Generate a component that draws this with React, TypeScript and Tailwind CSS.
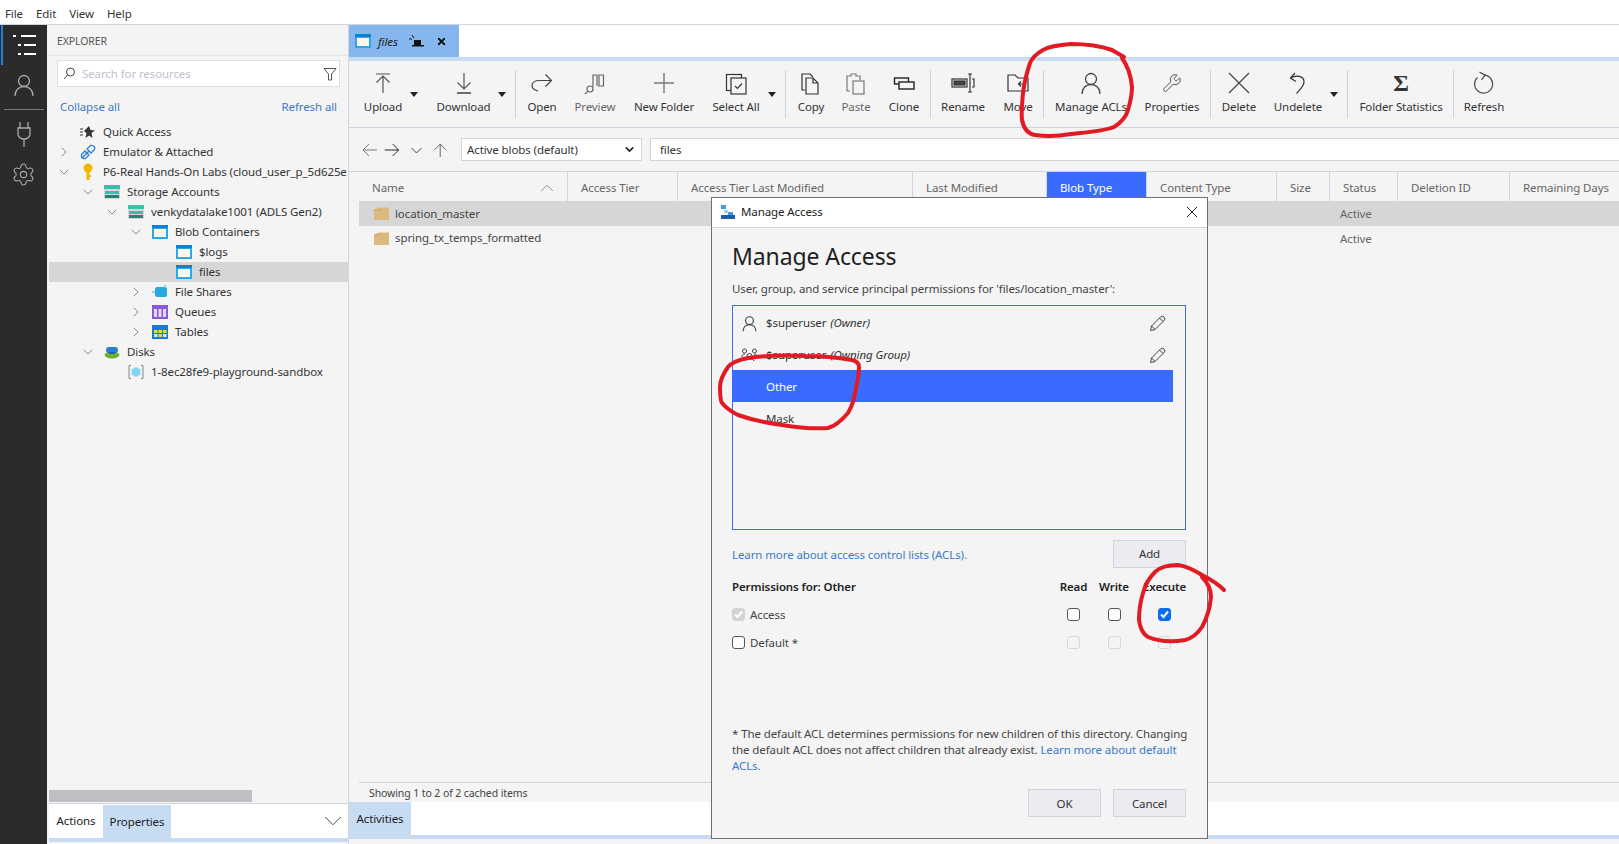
import React from "react";
import { ChevronDown, ChevronRight, ChevronUp, Settings, Wrench, X } from "lucide-react";

const FONT = "font-['Noto_Sans','Open_Sans',sans-serif]";

const Caret = ({ className = "" }: { className?: string }) => (
  <div className={`flex justify-center pt-[31px] ${className}`}>
    <svg width="8" height="5" viewBox="0 0 8 5">
      <path d="M0 0H8L4 5Z" fill="#222" />
    </svg>
  </div>
);

const Divider = ({ className = "" }: { className?: string }) => (
  <div className={`mt-[9px] h-[48px] w-px shrink-0 bg-[#cfcfdf] ${className}`} />
);

const Ico = ({ children, stroke = "#444" }: { children: React.ReactNode; stroke?: string }) => (
  <svg width="24" height="24" viewBox="0 0 24 24" fill="none" stroke={stroke} strokeWidth="1.2">
    {children}
  </svg>
);

const UserIcon = ({ size = 24, color = "#444" }: { size?: number; color?: string }) => (
  <svg width={size} height={size} viewBox="0 0 24 24" fill="none" stroke={color} strokeWidth={24 / size > 1 ? 1.7 : 1.3}>
    <circle cx="12" cy="8" r="5.5" />
    <path d="M3 23c0-6 4-9.500 9-9.500s9 3.500 9 9.500" />
  </svg>
);

function Tool({
  label,
  icon,
  className,
  muted = false,
}: {
  label: string;
  icon: React.ReactNode;
  className: string;
  muted?: boolean;
}) {
  return (
    <div className={`flex shrink-0 flex-col items-center pt-[5px] ${className}`}>
      <div className="flex h-[33px] items-center justify-center">{icon}</div>
      <div className={`h-4 whitespace-nowrap text-[11.5px] leading-4 ${muted ? "text-[#666]" : "text-[#333]"}`}>{label}</div>
    </div>
  );
}

function Toolbar() {
  return (
    <div className="flex h-[67px] shrink-0 border-b border-[#d0d0de] pl-3">
      <Tool
        label="Upload"
        className="w-[44px]"
        icon={
          <Ico stroke="#555">
            <path d="M5 3H19M12 5V22M5.500 11.500L12 5L18.500 11.500" />
          </Ico>
        }
      />
      <Caret className="w-[18px]" />
      <Tool
        label="Download"
        className="ml-[14px] w-[53px]"
        icon={
          <Ico stroke="#555">
            <path d="M12 2V18M5.500 11.500L12 18L18.500 11.500" />
            <path d="M5 22H19" stroke="#111" />
          </Ico>
        }
      />
      <Caret className="w-[24px]" />
      <Divider className="ml-px" />
      <Tool
        label="Open"
        className="ml-[6px] w-[40px]"
        icon={
          <Ico>
            <path d="M8 20C4 19 2 17 2 14.500C2 11 6 9.500 10 9.500H21M15.500 3.500L21.500 9.500L15.500 15.500" />
          </Ico>
        }
      />
      <Tool
        label="Preview"
        muted
        className="ml-[8px] w-[50px]"
        icon={
          <Ico stroke="#666">
            <path d="M10 16V4H14V15M16 4H20.500V15H16Z" />
            <circle cx="7" cy="18" r="3" />
            <path d="M4.800 20.200L2 23" />
          </Ico>
        }
      />
      <Tool
        label="New Folder"
        className="ml-[9px] w-[70px]"
        icon={
          <Ico stroke="#777">
            <path d="M12 2V22M2 12H22" strokeWidth="1.400" />
          </Ico>
        }
      />
      <Tool
        label="Select All"
        className="ml-[7px] w-[60px]"
        icon={
          <Ico stroke="#333">
            <rect x="2.500" y="3.500" width="15" height="16" />
            <rect x="7" y="7" width="15" height="16" fill="#f4f4f4" />
            <path d="M11 15L13.500 17.500L18 12.500" />
          </Ico>
        }
      />
      <Caret className="w-[12px]" />
      <Divider className="ml-[7px]" />
      <Tool
        label="Copy"
        className="ml-[7px] w-[36px]"
        icon={
          <Ico stroke="#333">
            <path d="M6 19H3V3H11L14 6" />
            <path d="M7 7H14L19 12V23H7Z" fill="#f4f4f4" />
            <path d="M14 7V12H19" />
          </Ico>
        }
      />
      <Tool
        label="Paste"
        muted
        className="ml-[9px] w-[36px]"
        icon={
          <Ico stroke="#777">
            <path d="M6 20H3V5H7V3H12V5H16V9" />
            <rect x="9" y="10" width="11" height="13" fill="#f4f4f4" />
          </Ico>
        }
      />
      <Tool
        label="Clone"
        className="ml-[10px] w-[40px]"
        icon={
          <Ico stroke="#222">
            <rect x="2.500" y="7" width="14" height="6" strokeWidth="1.400" />
            <rect x="7" y="11" width="15" height="7" fill="#f4f4f4" strokeWidth="1.400" />
          </Ico>
        }
      />
      <Divider className="ml-[6px]" />
      <Tool
        label="Rename"
        className="ml-[7px] w-[50px]"
        icon={
          <Ico stroke="#333">
            <rect x="1" y="8" width="15" height="8" />
            <rect x="3" y="10" width="11" height="4" fill="#444" />
            <path d="M17 3H21M19 3V21M17 21H21M21 8H23V16H21" />
          </Ico>
        }
      />
      <Tool
        label="Move"
        className="ml-[10px] w-[40px]"
        icon={
          <Ico stroke="#333">
            <path d="M2 20V4H9L12 7H22V20Z" />
            <path d="M18 13H13M15 10.500L12.500 13L15 15.500" />
          </Ico>
        }
      />
      <Divider className="ml-[5px]" />
      <Tool label="Manage ACLs" className="ml-[9px] w-[76px]" icon={<UserIcon />} />
      <Tool
        label="Properties"
        className="ml-[11px] w-[64px]"
        icon={<Wrench size={20} strokeWidth={1.1} color="#444" />}
      />
      <Divider className="ml-[6px]" />
      <Tool
        label="Delete"
        className="ml-[8px] w-[40px]"
        icon={
          <Ico stroke="#444">
            <path d="M2 2L22 22M22 2L2 22" />
          </Ico>
        }
      />
      <Tool
        label="Undelete"
        className="ml-[10px] w-[58px]"
        icon={
          <Ico stroke="#333">
            <path d="M9 2L4.500 7L10 10.500" />
            <path d="M4.500 7C10 4 18 4.500 18 11C18 15 14 18.500 10.500 22.500" />
          </Ico>
        }
      />
      <Caret className="w-[14px]" />
      <Divider className="ml-[6px]" />
      <Tool
        label="Folder Statistics"
        className="ml-[11px] w-[84px]"
        icon={<span className="font-['Liberation_Serif',serif] text-[24px] font-bold leading-6 text-[#333]">Σ</span>}
      />
      <Divider className="ml-[10px]" />
      <Tool
        label="Refresh"
        className="ml-[6px] w-[48px]"
        icon={
          <Ico stroke="#444">
            <path d="M13 4.200A9 9 0 1 1 5.500 6.500" />
            <path d="M7.500 1L13 4.200L9.500 9" />
          </Ico>
        }
      />
    </div>
  );
}

const ContainerIcon = () => (
  <svg width="16" height="14" viewBox="0 0 16 14">
    <rect width="16" height="14" fill="#29a9e8" />
    <rect y="0" width="16" height="3" fill="#0f7fd0" />
    <rect x="2" y="4" width="12" height="8" fill="#fdf8ec" />
  </svg>
);

const StorageIcon = () => (
  <svg width="16" height="14" viewBox="0 0 16 14">
    <rect width="16" height="4" fill="#3fbcab" />
    <rect y="4" width="16" height="10" fill="#d7d7d7" />
    <rect x="1" y="6" width="14" height="3" fill="#3fbcab" />
    <rect x="1" y="10" width="14" height="3" fill="#2f7d76" />
  </svg>
);

type TreeRow = {
  label: string;
  pad: string;
  chevron?: "right" | "down";
  icon: React.ReactNode;
  selected?: boolean;
};

const treeRows: TreeRow[] = [
  {
    label: "Quick Access",
    pad: "pl-[7px]",
    icon: (
      <svg width="16" height="14" viewBox="0 0 16 14">
        <path d="M9 1L10.500 5L15 5.500L11.500 8L12.500 13L9 10.500L5.500 13L6.500 8L4 6Z" fill="#333" />
        <path d="M0 4H3M0 7H3M0 10H3" stroke="#333" />
      </svg>
    ),
  },
  {
    label: "Emulator & Attached",
    pad: "pl-[7px]",
    chevron: "right",
    icon: (
      <svg width="16" height="16" viewBox="0 0 16 16" fill="none" stroke="#2a7fd4" strokeWidth="1.300">
        <path d="M6.500 9.500L2.500 13.500M1.500 10.500L5 7L9 11L5.500 14.500Q3 15 1.500 13Z" />
        <path d="M9.500 6.500L6 10M7 5L10.500 1.500Q13 1 14.500 3Q15 5 14.500 5.500L11 9Z" />
      </svg>
    ),
  },
  {
    label: "P6-Real Hands-On Labs (cloud_user_p_5d625e",
    pad: "pl-[7px]",
    chevron: "down",
    icon: (
      <svg width="16" height="18" viewBox="0 0 16 18">
        <circle cx="8" cy="5" r="4.500" fill="#f5b800" />
        <rect x="6.500" y="8" width="3" height="9" fill="#f5b800" />
        <rect x="9" y="12" width="2" height="2" fill="#f5b800" />
      </svg>
    ),
  },
  { label: "Storage Accounts", pad: "pl-[31px]", chevron: "down", icon: <StorageIcon /> },
  { label: "venkydatalake1001 (ADLS Gen2)", pad: "pl-[55px]", chevron: "down", icon: <StorageIcon /> },
  { label: "Blob Containers", pad: "pl-[79px]", chevron: "down", icon: <ContainerIcon /> },
  { label: "$logs", pad: "pl-[103px]", icon: <ContainerIcon /> },
  { label: "files", pad: "pl-[103px]", icon: <ContainerIcon />, selected: true },
  {
    label: "File Shares",
    pad: "pl-[79px]",
    chevron: "right",
    icon: (
      <svg width="16" height="14" viewBox="0 0 16 14">
        <rect x="3" y="2" width="12" height="10" rx="2" fill="#2aa8e0" />
        <path d="M0 7H3M13 0V3" stroke="#6cc8ee" strokeWidth="1.500" />
      </svg>
    ),
  },
  {
    label: "Queues",
    pad: "pl-[79px]",
    chevron: "right",
    icon: (
      <svg width="16" height="14" viewBox="0 0 16 14">
        <rect width="16" height="14" fill="#8a5bd6" />
        <rect x="2" y="4" width="3" height="8" fill="#e3d6f7" />
        <rect x="6.500" y="4" width="3" height="8" fill="#e3d6f7" />
        <rect x="11" y="4" width="3" height="8" fill="#e3d6f7" />
      </svg>
    ),
  },
  {
    label: "Tables",
    pad: "pl-[79px]",
    chevron: "right",
    icon: (
      <svg width="16" height="14" viewBox="0 0 16 14">
        <rect width="16" height="14" fill="#1f78d8" />
        <rect x="2" y="5" width="3.500" height="3" fill="#f5d04a" />
        <rect x="6.500" y="5" width="3.500" height="3" fill="#f5d04a" />
        <rect x="11" y="5" width="3.500" height="3" fill="#f5d04a" />
        <rect x="2" y="9" width="3.500" height="3" fill="#cfe5fa" />
        <rect x="6.500" y="9" width="3.500" height="3" fill="#f5d04a" />
        <rect x="11" y="9" width="3.500" height="3" fill="#cfe5fa" />
      </svg>
    ),
  },
  {
    label: "Disks",
    pad: "pl-[31px]",
    chevron: "down",
    icon: (
      <svg width="16" height="14" viewBox="0 0 16 14">
        <ellipse cx="8" cy="10" rx="7.500" ry="3.500" fill="#6bb32e" />
        <rect x="2" y="2" width="12" height="6" rx="3" fill="#2a7fd4" />
        <rect x="5" y="7" width="6" height="2" fill="#1e5fa3" />
      </svg>
    ),
  },
  {
    label: "1-8ec28fe9-playground-sandbox",
    pad: "pl-[55px]",
    icon: (
      <svg width="16" height="14" viewBox="0 0 16 14">
        <path d="M3 0.500H1V13.500H3M13 0.500H15V13.500H13" fill="none" stroke="#888" />
        <path d="M8 2L12.500 4.500V9.500L8 12L3.500 9.500V4.500Z" fill="#7fd6f5" />
      </svg>
    ),
  },
];

function Sidebar() {
  return (
    <aside className="flex w-[302px] shrink-0 flex-col border-r border-[#d3d3e0] bg-[#f4f4f4] pl-[2px]">
      <div className="flex h-[31px] shrink-0 items-center border-b border-[#e4e4ea] pl-2 pt-[3px] text-[10.5px] text-[#555]">EXPLORER</div>
      <div className="ml-2 mt-1 flex h-[27px] w-[283px] shrink-0 items-center border border-[#dcdce4] bg-white pl-[5px] pr-[2px]">
        <svg width="13" height="13" viewBox="0 0 13 13" fill="none" stroke="#444">
          <circle cx="7.500" cy="5" r="4" />
          <path d="M4.500 8L1 12" />
        </svg>
        <span className="ml-[6px] flex-1 pt-px text-[11.5px] text-[#c0c0cc]">Search for resources</span>
        <svg width="14" height="14" viewBox="0 0 14 14" fill="none" stroke="#555">
          <path d="M1 1.500H13L8.500 7V13H5.500V7Z" />
        </svg>
      </div>
      <div className="mt-[12px] flex h-4 shrink-0 justify-between pl-[11px] pr-[11px] text-[11.5px] leading-4 text-[#3a7ac8]">
        <span>Collapse all</span>
        <span>Refresh all</span>
      </div>
      <div className="mt-[7px] flex-1 overflow-hidden">
        {treeRows.map((row) => (
          <div
            key={row.label}
            className={`flex h-5 items-center whitespace-nowrap text-[11.5px] text-[#333] ${row.pad} ${row.selected ? "bg-[#d6d6d6]" : ""}`}
          >
            <span className="mr-2 flex w-4 shrink-0 justify-center text-[#444]">
              {row.chevron === "right" && <ChevronRight size={20} strokeWidth={0.9} />}
              {row.chevron === "down" && <ChevronDown size={20} strokeWidth={0.9} />}
            </span>
            <span className="mr-[7px] flex w-4 shrink-0 justify-center">{row.icon}</span>
            {row.label}
          </div>
        ))}
      </div>
      <div className="h-3 w-[203px] shrink-0 bg-[#bfbfc3]" />
      <div className="mt-px flex h-[35px] shrink-0 items-stretch border-t border-[#d3d3e0] bg-white text-[11.5px] text-[#222]">
        <div className="flex w-[54px] items-center justify-center">Actions</div>
        <div className="mt-px flex w-[68px] items-center justify-center bg-[#c7dcf3]">Properties</div>
        <div className="flex flex-1 items-center justify-end">
          <ChevronDown size={30} strokeWidth={0.7} color="#333" />
        </div>
      </div>
      <div className="h-1 shrink-0 bg-[#c7dcf3]" />
      <div className="h-[2px] shrink-0" />
    </aside>
  );
}

const columns = [
  { label: "Access Tier", cls: "w-[110px]" },
  { label: "Access Tier Last Modified", cls: "w-[235px]" },
  { label: "Last Modified", cls: "w-[134px]" },
  { label: "Blob Type", cls: "w-[100px] bg-[#3a6bff] !text-white" },
  { label: "Content Type", cls: "w-[130px]" },
  { label: "Size", cls: "w-[53px]" },
  { label: "Status", cls: "w-[68px]" },
  { label: "Deletion ID", cls: "w-[112px]" },
  { label: "Remaining Days", cls: "flex-1 !border-r-0" },
];

const FolderIcon = () => (
  <svg width="15" height="13" viewBox="0 0 15 13">
    <path d="M0 2.500L5 0.500H15V13H0Z" fill="#dcb97c" />
    <path d="M0 3H6L7 1" fill="none" stroke="#c9a466" strokeWidth="0.700" />
  </svg>
);

function FileRow({ name, selected = false }: { name: string; selected?: boolean }) {
  return (
    <div className={`flex items-center pl-[15px] text-[11.5px] text-[#444] ${selected ? "h-[25px] bg-[#d6d6d6]" : "h-[24px]"}`}>
      <FolderIcon />
      <span className="ml-[6px] w-[945px]">{name}</span>
      <span className="pt-px text-[#666]">Active</span>
    </div>
  );
}

function Main() {
  return (
    <main className="flex min-w-0 flex-1 flex-col bg-[#f4f4f4]">
      <div className="flex h-[32px] shrink-0 bg-white">
        <div className="flex w-[110px] items-center bg-[#85b7ee] pl-[6px] text-[11.5px] text-[#222]">
          <ContainerIcon />
          <span className="ml-[7px] pt-px italic">files</span>
          <svg className="ml-[11px]" width="16" height="12" viewBox="0 0 16 12">
            <rect x="5" y="5" width="7" height="5" fill="#111" />
            <rect x="3" y="10" width="12" height="1.500" fill="#111" />
            <path d="M0 4H3M3 0L5 3" stroke="#111" />
          </svg>
          <X className="ml-[11px]" size={11} strokeWidth={4} color="#111" />
        </div>
      </div>
      <div className="h-1 shrink-0 bg-[#c7dcf3]" />
      <Toolbar />
      <div className="flex h-[44px] shrink-0 items-start border-b border-[#d3d3e0] pt-[10px]">
        <div className="flex h-[23px] w-[112px] shrink-0 items-center pl-[13px]">
          <svg width="100" height="16" viewBox="0 0 100 16" fill="none">
            <path d="M15 8H1M7 2L1 8L7 14" stroke="#777" />
            <path d="M23 8H37M31 2L37 8L31 14" stroke="#222" />
            <path d="M50 6L55 11L60 6" stroke="#444" />
            <path d="M79 15V2M73 8L79 2L85 8" stroke="#666" />
          </svg>
        </div>
        <div className="flex h-[23px] w-[181px] shrink-0 items-center justify-between border border-[#d3d3e0] bg-white pl-[5px] pr-[5px] text-[11.5px] text-[#333]">
          Active blobs (default)
          <ChevronDown size={13} strokeWidth={3} color="#222" />
        </div>
        <div className="ml-[8px] flex h-[23px] flex-1 items-center border border-r-0 border-[#d3d3e0] bg-white pl-[9px] text-[11.5px] text-[#333]">files</div>
      </div>
      <div className="ml-[10px] flex min-h-0 flex-1 flex-col overflow-hidden">
        <div className="flex h-[29px] shrink-0 text-[11.5px] text-[#666]">
          <div className="flex w-[209px] shrink-0 items-center justify-between border-r border-[#d3d3e0] pl-[13px] pr-[9px] pt-[3px]">
            Name
            <ChevronUp size={22} strokeWidth={0.8} color="#666" />
          </div>
          {columns.map((col) => (
            <div key={col.label} className={`flex shrink-0 items-center whitespace-nowrap border-r border-[#d3d3e0] pl-[13px] pt-[3px] ${col.cls}`}>
              {col.label}
            </div>
          ))}
        </div>
        <FileRow name="location_master" selected />
        <FileRow name="spring_tx_temps_formatted" />
        <div className="flex-1" />
        <div className="flex h-[20px] shrink-0 items-center border-t border-[#d3d3e0] pl-[10px] pt-[3px] text-[10.5px] text-[#444]">
          Showing 1 to 2 of 2 cached items
        </div>
      </div>
      <div className="flex h-[33px] shrink-0 bg-white">
        <div className="flex w-[62px] items-center justify-center bg-[#c7dcf3] pt-px text-[11.5px] text-[#222]">Activities</div>
      </div>
      <div className="h-1 shrink-0 bg-[#c7dcf3]" />
      <div className="h-[5px] shrink-0" />
    </main>
  );
}

function Check({ state }: { state: "off" | "on" | "grey" | "disabled" }) {
  const cls = {
    off: "border-[#555] bg-white",
    on: "border-[#0b6cf0] bg-[#0b6cf0]",
    grey: "border-[#d4d4d4] bg-[#d4d4d4]",
    disabled: "border-[#d8d8d8] bg-[#f4f4f4]",
  }[state];
  return (
    <span className={`flex h-[13px] w-[13px] shrink-0 items-center justify-center rounded-[3px] border ${cls}`}>
      {(state === "on" || state === "grey") && (
        <svg width="11" height="11" viewBox="0 0 11 11" fill="none" stroke="white" strokeWidth="2">
          <path d="M2 5.500L4.500 8L9 2.500" />
        </svg>
      )}
    </span>
  );
}

function AclRow({ name, role, icon }: { name: string; role?: string; icon?: React.ReactNode }) {
  return (
    <div className={`flex h-[32px] items-center text-[11.5px] text-[#333] ${role ? "" : "pt-[2px]"}`}>
      <span className="flex w-[33px] shrink-0 justify-center">{icon}</span>
      {name}
      {role && <span className="ml-1 italic">{role}</span>}
      {role && (
        <svg className="ml-auto mr-[7px]" width="17" height="17" viewBox="0 0 17 17" fill="none" stroke="#444">
          <path d="M1.500 15.500L2.500 11L12 1.500Q13.500 0.800 15 2T15.500 5L6 14.500Z" />
          <path d="M2.500 11L6 14.500M10.500 3L14 6.500" />
        </svg>
      )}
    </div>
  );
}

function PermRow({ label, first, read, write, exec }: { label: string; first: "off" | "grey"; read: "off" | "disabled"; write: "off" | "disabled"; exec: "on" | "disabled" }) {
  return (
    <div className="flex h-5 items-center text-[11.5px] text-[#444]">
      <Check state={first} />
      <span className="ml-[5px] flex-1 pt-px">{label}</span>
      <span className="flex w-[41px] justify-center"><Check state={read} /></span>
      <span className="flex w-[40px] justify-center"><Check state={write} /></span>
      <span className="ml-[9px] flex w-[43px] justify-center"><Check state={exec} /></span>
    </div>
  );
}

function Dialog() {
  return (
    <div className="absolute left-[711px] top-[197px] flex h-[642px] w-[497px] flex-col border border-[#6f6f73] bg-[#f4f4f4]">
      <div className="flex h-[30px] shrink-0 items-center border-b border-[#d3d3e0] bg-white pb-[2px] pl-[9px] pr-[9px] text-[11.5px] text-[#222]">
        <svg width="14" height="14" viewBox="0 0 14 14">
          <rect x="0" y="0" width="5" height="4" fill="#3aa0e8" />
          <rect x="3" y="5" width="4" height="3" fill="#9fd0f2" />
          <rect x="7" y="7" width="5" height="3" fill="#3aa0e8" />
          <rect x="0" y="10" width="14" height="4" fill="#1f5fa8" />
        </svg>
        <span className="ml-[6px] flex-1">Manage Access</span>
        <svg width="12" height="12" viewBox="0 0 12 12" stroke="#222">
          <path d="M1 1L11 11M11 1L1 11" />
        </svg>
      </div>
      <div className="flex flex-1 flex-col pl-5 pr-[21px]">
        <h1 className="mt-3 h-8 text-[23px] font-normal leading-8 text-[#222]">Manage Access</h1>
        <p className="mt-[9px] h-4 text-[11.5px] leading-4 text-[#444]">User, group, and service principal permissions for 'files/location_master':</p>
        <div className="mt-2 h-[225px] border border-[#3a6bff] pr-3 pt-[1px]">
          <AclRow name="$superuser" role="(Owner)" icon={<UserIcon size={17} />} />
          <AclRow
            name="$superuser"
            role="(Owning Group)"
            icon={
              <svg width="17" height="14" viewBox="0 0 17 14" fill="none" stroke="#444">
                <circle cx="3.500" cy="3" r="2" />
                <circle cx="13.500" cy="3" r="2" />
                <circle cx="8.500" cy="8" r="2.500" />
                <path d="M1 9C1 7 2 6 4 6M16 9C16 7 15 6 13 6M4 13C4 11.500 6 11 8.500 11S13 11.500 13 13" />
              </svg>
            }
          />
          <div className="-mt-[1px] flex h-[32px] items-center bg-[#3a6bff] pl-[33px] pt-[2px] text-[11.5px] text-white">Other</div>
          <AclRow name="Mask" />
        </div>
        <div className="mt-[10px] flex h-[28px] items-center justify-between">
          <span className="pt-px text-[11.5px] text-[#3a7ac8]">Learn more about access control lists (ACLs).</span>
          <button className="h-[28px] w-[73px] border border-[#d3d3e0] bg-[#ebebf0] text-[11.5px] text-[#333]">Add</button>
        </div>
        <div className="mt-[11px] flex h-4 text-[11.5px] font-semibold leading-4 text-[#222]">
          <span className="flex-1">Permissions for: Other</span>
          <span className="w-[41px] text-center">Read</span>
          <span className="w-[40px] text-center">Write</span>
          <span className="ml-[9px] w-[43px] whitespace-nowrap text-center">Execute</span>
        </div>
        <div className="mt-[9px]">
          <PermRow label="Access" first="grey" read="off" write="off" exec="on" />
        </div>
        <div className="mt-2">
          <PermRow label="Default *" first="off" read="disabled" write="disabled" exec="disabled" />
        </div>
        <p className="-mr-2 mt-[74px] text-[11.5px] leading-4 text-[#444]">
          * The default ACL determines permissions for new children of this directory. Changing the default ACL does not affect children that already exist.{" "}
          <span className="text-[#3a7ac8]">Learn more about default ACLs.</span>
        </p>
        <div className="mt-[15px] flex justify-end gap-3">
          <button className="h-[28px] w-[73px] border border-[#d3d3e0] bg-[#ebebf0] pt-px text-[11.5px] text-[#333]">OK</button>
          <button className="h-[28px] w-[73px] border border-[#d3d3e0] bg-[#ebebf0] pt-px text-[11.5px] text-[#333]">Cancel</button>
        </div>
      </div>
    </div>
  );
}

// red pen marks drawn over the screenshot
function Annotations() {
  return (
    <svg className="pointer-events-none absolute left-0 top-0" width="1619" height="844" fill="none" stroke="#e01b24" strokeWidth="4" strokeLinecap="round" strokeLinejoin="round">
      <path d="M1124 57L1112 50C1098 45 1085 44 1071 44C1058 45 1050 46 1043 50C1036 54 1032 58 1030 63C1026 75 1024 85 1023 93C1022 105 1021 113 1022 120C1024 130 1029 134 1035 135C1048 137 1060 136 1071 134C1090 132 1104 131 1114 127C1122 122 1126 117 1128 110C1131 100 1132 94 1132 87C1131 75 1127 65 1122 58" />
      <path d="M852 360C835 357 820 356 805 356C780 355 762 356 748 358C738 360 732 362 728 367C723 374 720 380 720 387C720 395 720 400 722 403C727 409 732 412 738 415C752 420 767 423 782 425C800 428 815 429 828 428C836 426 842 420 848 413C852 406 854 400 855 393C857 384 859 376 859 367C859 363 856 361 852 360" />
      <path d="M1224 590C1218 584 1210 579 1202 575C1194 570 1186 566 1178 565C1168 565 1160 567 1155 572C1149 578 1145 585 1143 593C1140 603 1139 612 1139 620C1140 628 1143 634 1148 637C1160 642 1173 642 1185 640C1193 638 1198 633 1202 627C1207 618 1210 608 1211 597C1211 589 1207 582 1202 577" />
    </svg>
  );
}

export default function App() {
  return (
    <div className={`relative flex h-[844px] w-[1619px] flex-col overflow-hidden bg-white tracking-[-0.1px] ${FONT}`}>
      <div className="flex h-[25px] shrink-0 items-center gap-[13px] border-b border-[#d3d3e0] pl-[5px] pt-[3px] text-[11.5px] text-[#333]">
        <span>File</span>
        <span>Edit</span>
        <span>View</span>
        <span>Help</span>
      </div>
      <div className="flex min-h-0 flex-1">
        <nav className="flex w-[47px] shrink-0 flex-col items-center bg-[#2b2b2b]">
          <div className="ml-px flex h-[40px] w-full items-center justify-center border-l-2 border-[#1f7fd8]">
            <svg width="24" height="22" viewBox="0 0 24 22" fill="white">
              <rect x="0" y="1" width="3" height="2" />
              <rect x="8" y="1" width="15" height="2" />
              <rect x="5" y="10" width="3" height="2" />
              <rect x="11" y="10" width="12" height="2" />
              <rect x="5" y="19" width="3" height="2" />
              <rect x="11" y="19" width="12" height="2" />
            </svg>
          </div>
          <div className="mt-2"><UserIcon size={24} color="#aaa" /></div>
          <div className="mt-3 h-px w-10 bg-[#777]" />
          <svg className="mt-3" width="14" height="26" viewBox="0 0 14 26" fill="none" stroke="#aaa" strokeWidth="1.300">
            <path d="M3 0V6M11 0V6M1 6H13V12C13 15 10 17 7 17S1 15 1 12ZM7 17V25" />
          </svg>
          <div className="mt-[14px]"><Settings size={25} strokeWidth={1} color="#aaa" /></div>
        </nav>
        <Sidebar />
        <Main />
      </div>
      <Dialog />
      <Annotations />
    </div>
  );
}
